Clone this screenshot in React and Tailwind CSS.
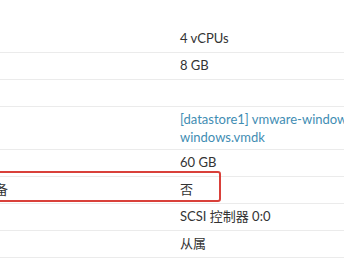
import React from 'react'

const rows = [
  { label: 'CPU', value: '4 vCPUs' },
  { label: '内存', value: '8 GB' },
  { label: '硬盘 1', value: '' },
  { label: '后备', value: ['[datastore1] vmware-windows/vmware-', 'windows.vmdk'], link: true },
  { label: '容量', value: '60 GB' },
  { label: '精简置备', value: '否' },
  { label: '控制器', value: 'SCSI 控制器 0:0' },
  { label: '模式', value: '从属' },
]

const App = () => {
  return (
    <div className="relative w-[344px] h-[258px] overflow-hidden bg-white" style={{ fontFamily: 'Lato, "Noto Sans CJK SC", sans-serif' }}>
      <div className="pt-[26px] ml-[-48px] w-[600px]">
        {rows.map((row) => (
          <div key={row.label} className="flex border-b border-[#ebebeb]">
            <div className="w-[220px] shrink-0 pl-1 h-[26px] flex items-center text-[13px] text-[#333333]">
              {row.label}
            </div>
            {Array.isArray(row.value) ? (
              <div className="pl-2 py-[3px] text-[13px] leading-[18px] text-[#3f8db3] whitespace-nowrap">
                <div>{row.value[0]}</div>
                <div>{row.value[1]}</div>
              </div>
            ) : (
              <div className="pl-2 h-[26px] flex items-center text-[13px] text-[#333333] whitespace-nowrap">
                {row.value}
              </div>
            )}
          </div>
        ))}
      </div>
      {/* annotation box */}
      <div className="absolute left-[-10px] top-[171px] w-[231px] h-[31px] border-2 border-[#d9403a] rounded-[3px]"></div>
    </div>
  )
}

export default App
